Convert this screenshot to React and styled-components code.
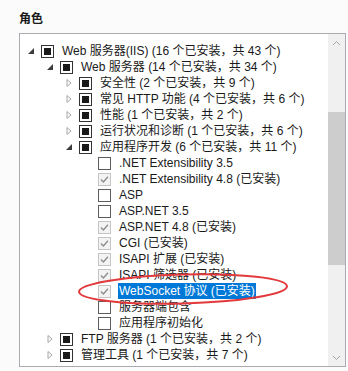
import React from "react";
import styled, { createGlobalStyle } from "styled-components";

const GlobalStyle = createGlobalStyle`
  html, body {
    margin: 0;
    padding: 0;
    background: #fbfbfb;
  }
  body {
    font-family: "Liberation Sans", "Noto Sans CJK SC", sans-serif;
    font-size: 12px;
    color: #1a1a1a;
  }
`;

const Page = styled.div`
  width: 348px;
  height: 371px;
  box-sizing: border-box;
  padding: 10px 0 0 19px;
  overflow: hidden;
`;

const Heading = styled.div`
  font-family: "Noto Sans CJK SC", sans-serif;
  font-weight: 700;
  font-size: 12px;
  line-height: 16px;
  margin-bottom: 7px;
  color: #1a1a1a;
`;

const Box = styled.div`
  position: relative;
  width: 327px;
  height: 334px;
  box-sizing: border-box;
  border: 1px solid #a9abb0;
  background: #fff;
  display: flex;
`;

const Tree = styled.div`
  flex: 1;
  padding: 9px 0 0 4px;
  overflow: hidden;
`;

const Row = styled.div`
  display: flex;
  align-items: center;
  height: 16px;
  padding-left: ${(p) => p.$level * 19}px;
  white-space: nowrap;
`;

const Expander = styled.div`
  width: 14px;
  height: 16px;
  display: flex;
  align-items: center;
  justify-content: center;
  flex-shrink: 0;
`;

const Check = styled.div`
  width: 13px;
  height: 13px;
  box-sizing: border-box;
  margin-left: 3px;
  flex-shrink: 0;
  display: flex;
  align-items: center;
  justify-content: center;
  border: 1px solid
    ${(p) => (p.$state === "checked" ? "#c4c4c4" : p.$state === "partial" ? "#333" : "#5c5c5c")};
  background: ${(p) => (p.$state === "checked" ? "#f3f3f3" : "#fff")};
`;

const Fill = styled.div`
  width: 7px;
  height: 7px;
  background: #1a1a1a;
`;

const Label = styled.span`
  margin-left: 7px;
  padding: 0 1px;
  line-height: 16px;
  background: ${(p) => (p.$selected ? "#0078d7" : "transparent")};
  color: ${(p) => (p.$selected ? "#fff" : "#1a1a1a")};
`;

const ScrollBar = styled.div`
  width: 17px;
  flex-shrink: 0;
  background: #f0f0f0;
  display: flex;
  flex-direction: column;
`;

const Arrow = styled.div`
  height: 17px;
  display: flex;
  align-items: center;
  justify-content: center;
`;

const Track = styled.div`
  flex: 1;
  padding-top: 61px;
`;

const Thumb = styled.div`
  height: 153px;
  background: #cdcdcd;
`;

const Ellipse = styled.svg`
  position: absolute;
  left: 56px;
  top: 238px;
  pointer-events: none;
`;

const items = [
  { level: 0, exp: "open", state: "partial", label: "Web 服务器(IIS) (16 个已安装，共 43 个)" },
  { level: 1, exp: "open", state: "partial", label: "Web 服务器 (14 个已安装，共 34 个)" },
  { level: 2, exp: "closed", state: "partial", label: "安全性 (2 个已安装，共 9 个)" },
  { level: 2, exp: "closed", state: "partial", label: "常见 HTTP 功能 (4 个已安装，共 6 个)" },
  { level: 2, exp: "closed", state: "partial", label: "性能 (1 个已安装，共 2 个)" },
  { level: 2, exp: "closed", state: "partial", label: "运行状况和诊断 (1 个已安装，共 6 个)" },
  { level: 2, exp: "open", state: "partial", label: "应用程序开发 (6 个已安装，共 11 个)" },
  { level: 3, state: "unchecked", label: ".NET Extensibility 3.5" },
  { level: 3, state: "checked", label: ".NET Extensibility 4.8 (已安装)" },
  { level: 3, state: "unchecked", label: "ASP" },
  { level: 3, state: "unchecked", label: "ASP.NET 3.5" },
  { level: 3, state: "checked", label: "ASP.NET 4.8 (已安装)" },
  { level: 3, state: "checked", label: "CGI (已安装)" },
  { level: 3, state: "checked", label: "ISAPI 扩展 (已安装)" },
  { level: 3, state: "checked", label: "ISAPI 筛选器 (已安装)" },
  { level: 3, state: "checked", label: "WebSocket 协议 (已安装)", selected: true },
  { level: 3, state: "unchecked", label: "服务器端包含" },
  { level: 3, state: "unchecked", label: "应用程序初始化" },
  { level: 1, exp: "closed", state: "partial", label: "FTP 服务器 (1 个已安装，共 2 个)" },
  { level: 1, exp: "closed", state: "partial", label: "管理工具 (1 个已安装，共 7 个)" },
];

function Triangle({ type }) {
  if (type === "open") {
    return (
      <svg width="8" height="8" viewBox="0 0 8 8">
        <path d="M7 1 L7 7 L1 7 Z" fill="#3c3c3c" />
      </svg>
    );
  }
  if (type === "closed") {
    return (
      <svg width="8" height="10" viewBox="0 0 8 10">
        <path d="M2 1.5 L6 5 L2 8.5 Z" fill="none" stroke="#a6a6a6" strokeWidth="1" />
      </svg>
    );
  }
  return null;
}

function CheckMark() {
  return (
    <svg width="11" height="11" viewBox="0 0 11 11">
      <path d="M2 5.6 L4.4 8 L9 2.8" fill="none" stroke="#8e8e8e" strokeWidth="1.4" />
    </svg>
  );
}

function Chevron({ up }) {
  return (
    <svg width="9" height="6" viewBox="0 0 9 6">
      <path
        d={up ? "M1 5 L4.5 1.5 L8 5" : "M1 1 L4.5 4.5 L8 1"}
        fill="none"
        stroke="#a3a3a3"
        strokeWidth="1"
      />
    </svg>
  );
}

export default function App() {
  return (
    <Page>
      <GlobalStyle />
      <Heading>角色</Heading>
      <Box>
        <Tree>
          {items.map((it, i) => (
            <Row key={i} $level={it.level}>
              <Expander>
                <Triangle type={it.exp} />
              </Expander>
              <Check $state={it.state}>
                {it.state === "partial" && <Fill />}
                {it.state === "checked" && <CheckMark />}
              </Check>
              <Label $selected={it.selected}>{it.label}</Label>
            </Row>
          ))}
        </Tree>
        <ScrollBar>
          <Arrow>
            <Chevron up />
          </Arrow>
          <Track>
            <Thumb />
          </Track>
          <Arrow>
            <Chevron />
          </Arrow>
        </ScrollBar>
        <Ellipse width="216" height="36" viewBox="0 0 216 36">
          <ellipse
            cx="107"
            cy="17"
            rx="104"
            ry="14.5"
            fill="none"
            stroke="#e23a3c"
            strokeWidth="2"
            transform="rotate(-1.5 107 17)"
          />
        </Ellipse>
      </Box>
    </Page>
  );
}
